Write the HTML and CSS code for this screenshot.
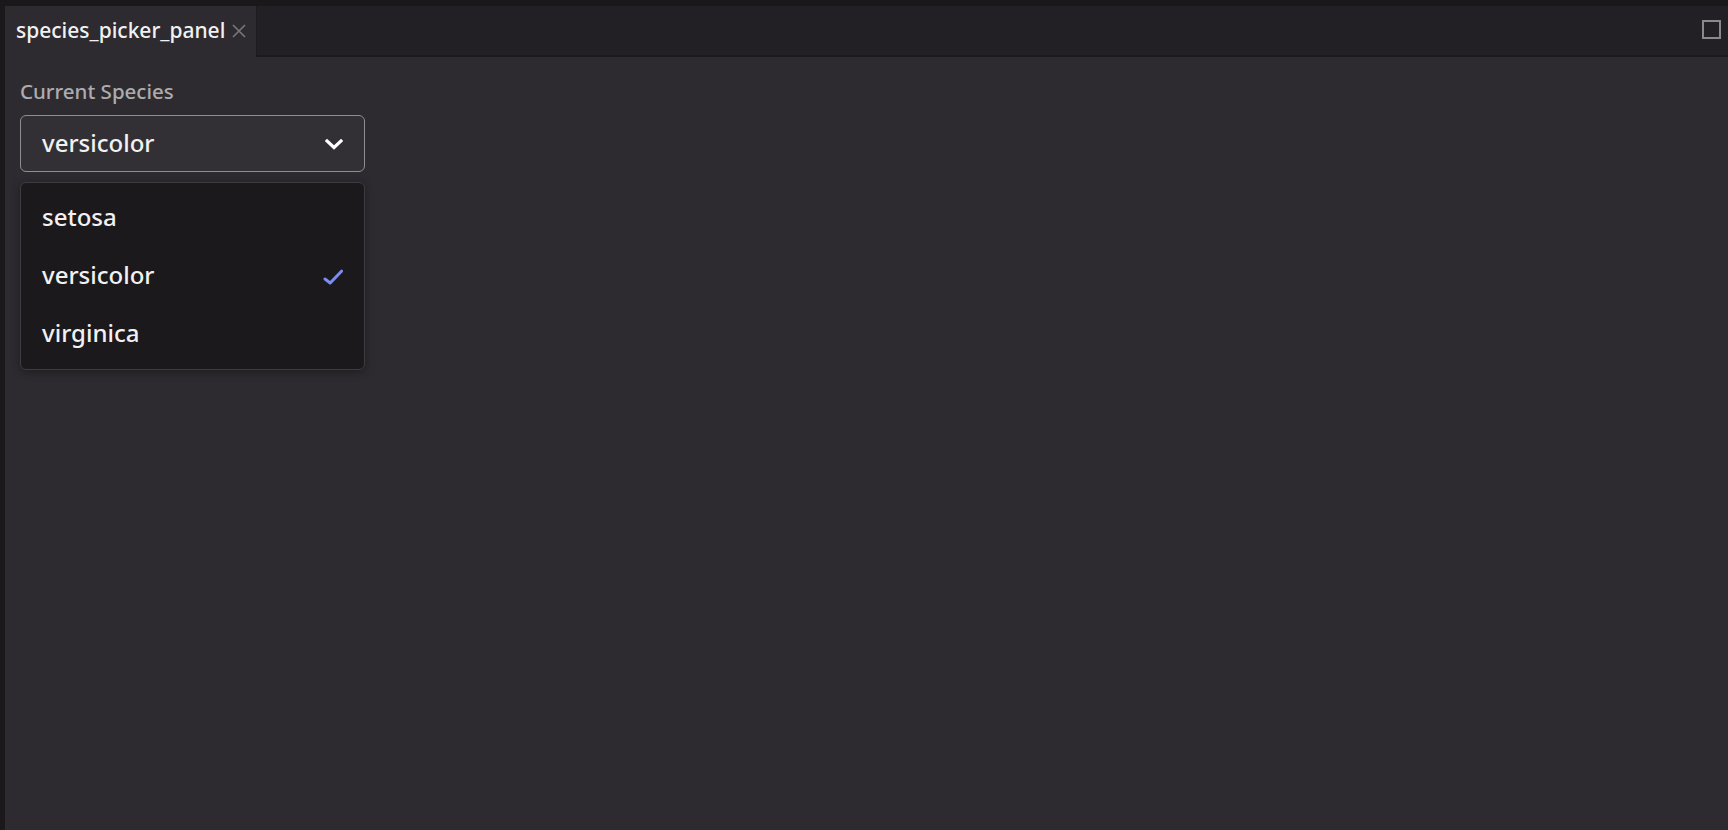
FILE: index.html
```html
<!DOCTYPE html>
<html lang="en">
<head>
<meta charset="utf-8">
<title>species_picker_panel</title>
<link rel="stylesheet" href="styles.css">
</head>
<body>
<div class="app">
  <div class="panel">
    <div class="tabbar">
      <div class="tab">
        <span class="tab-title">species_picker_panel</span>
        <svg class="tab-close" viewBox="0 0 14 14" width="14" height="14" aria-hidden="true">
          <path d="M1 1 L13 13 M13 1 L1 13" />
        </svg>
      </div>
      <button class="maximize" aria-label="Maximize">
        <svg viewBox="0 0 19 19" width="19" height="19" aria-hidden="true">
          <rect x="1" y="1" width="17" height="17" />
        </svg>
      </button>
    </div>
    <div class="content">
      <div class="field-label">Current Species</div>
      <div class="picker">
        <button class="picker-trigger">
          <span class="picker-value">versicolor</span>
          <svg class="chevron" viewBox="0 0 18 11" width="18" height="11" aria-hidden="true">
            <path d="M2 2 L9 8.5 L16 2" />
          </svg>
        </button>
        <ul class="menu">
          <li class="menu-item">setosa</li>
          <li class="menu-item selected">versicolor
            <svg class="check" viewBox="0 0 20 16" width="20" height="16" aria-hidden="true">
              <path d="M2 10 L7.2 14 L18.5 2.2" />
            </svg>
          </li>
          <li class="menu-item">virginica</li>
        </ul>
      </div>
    </div>
  </div>
</div>
</body>
</html>
```

FILE: styles.css
```css
* { box-sizing: border-box; }
html, body {
  margin: 0;
  padding: 0;
  background: #1a181b;
  font-family: "Noto Sans", "Open Sans", sans-serif;
  color: #f0eff0;
}
.app {
  width: 1728px;
  height: 830px;
  padding: 6px 0 0 5px;
  background: #1a181b;
}
.panel {
  height: 100%;
  display: flex;
  flex-direction: column;
  background: #2d2b2f;
}
.tabbar {
  height: 51px;
  flex: none;
  display: flex;
  align-items: stretch;
  background: #222024;
  box-shadow: inset 0 -2px 0 #1b191c;
}
.tab {
  display: flex;
  align-items: center;
  gap: 7px;
  padding: 0 10px 0 11px;
  background: #2d2b2f;
  box-shadow: 1px 0 0 #1d1b1e;
}
.tab-title {
  font-size: 21px;
  font-weight: 500;
  line-height: 24px;
  color: #f2f1f2;
  padding-bottom: 4px;
}
.tab-close {
  margin-bottom: 2px;
}
.tab-close path {
  stroke: #77757a;
  stroke-width: 1.7;
  fill: none;
}
.maximize {
  margin-left: auto;
  margin-right: 7px;
  padding: 0;
  border: 0;
  background: transparent;
  display: flex;
  align-items: center;
  margin-top: -4px;
}
.maximize rect {
  fill: none;
  stroke: #8a888c;
  stroke-width: 2;
}
.content {
  padding: 22px 15px 0;
}
.field-label {
  font-size: 20.5px;
  font-weight: 500;
  line-height: 24px;
  color: #adabaf;
  margin-bottom: 12px;
}
.picker {
  position: relative;
  width: 345px;
}
.picker-trigger {
  width: 100%;
  height: 57px;
  display: flex;
  align-items: center;
  justify-content: space-between;
  padding: 0 21px 2px 21px;
  background: #323034;
  border: 1px solid #8f8d91;
  border-radius: 6px;
  color: #f2f1f2;
  font-family: inherit;
  font-size: 24px;
  font-weight: 500;
  line-height: 28px;
  text-align: left;
}
.chevron path {
  fill: none;
  stroke: #ffffff;
  stroke-width: 3.2;
  stroke-linecap: square;
}
.chevron { margin-top: 3px; }
.menu {
  position: absolute;
  left: 0;
  top: calc(100% + 10px);
  width: 100%;
  margin: 0;
  padding: 7px 0 5px;
  list-style: none;
  background: #1b191c;
  border: 1px solid #3e3c40;
  border-radius: 6px;
  box-shadow: 0 2px 8px rgba(0, 0, 0, 0.35);
}
.menu-item {
  height: 58px;
  display: flex;
  align-items: center;
  justify-content: space-between;
  padding: 0 21px 4px;
  font-size: 24px;
  font-weight: 500;
  line-height: 28px;
  color: #f2f1f2;
}
.check {
  margin-top: 3px;
}
.check path {
  fill: none;
  stroke: #7b8cf2;
  stroke-width: 3;
  stroke-linecap: round;
  stroke-linejoin: round;
}
```
